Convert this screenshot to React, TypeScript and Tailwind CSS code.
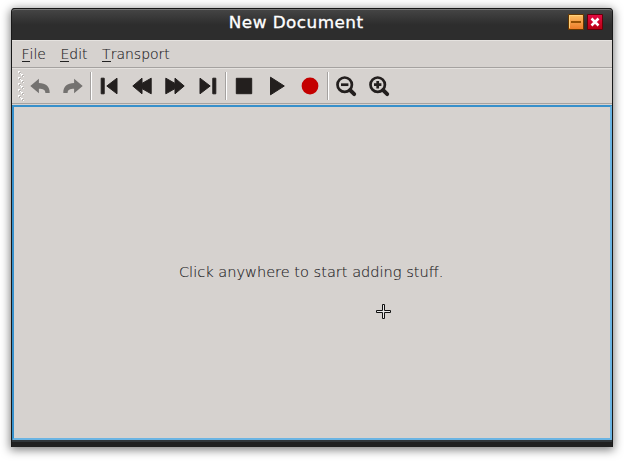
import type { ReactNode } from "react";

function Tool({ label, children }: { label: string; children: ReactNode }) {
  return (
    <button aria-label={label} className="h-[34px] w-[33px] shrink-0 text-[#231f1e]">
      <svg width="33" height="34" viewBox="0 1 33 34" fill="currentColor" stroke="currentColor" strokeWidth="1" strokeLinejoin="round">
        {children}
      </svg>
    </button>
  );
}

function Divider() {
  return <div className="mr-px h-7 w-[2px] shrink-0 border-r border-l border-r-white border-l-[#a5a2a0]" />;
}

function Grip() {
  return (
    <svg width="6" height="30" viewBox="0 0 6 30" className="ml-[6px] shrink-0" shapeRendering="crispEdges">
      {[0, 6, 12, 18, 24].map((y) => (
        <g key={y}>
          <path d={`M1 ${y + 1}h2v1h-1v1h-1z M4 ${y + 4}h2v1h-1v1h-1z`} fill="#b9b5b2" />
          <path d={`M0 ${y}h2v1h-1v1h-1z M3 ${y + 3}h2v1h-1v1h-1z M2 ${y + 2}h1v1h-1z M5 ${y + 5}h1v1h-1z`} fill="#fff" />
        </g>
      ))}
    </svg>
  );
}

function Menu({ children }: { children: string }) {
  return (
    <button className="h-[19px] whitespace-nowrap">
      <span className="inline-block h-[17px] border-b border-[#222]">{children[0]}</span>
      {children.slice(1)}
    </button>
  );
}

export default function App() {
  return (
    <div className="h-[461px] w-[624px] overflow-hidden bg-white pt-2 pl-[11px] font-['DejaVu_Sans',sans-serif] text-[#1c1b1e]">
      <div className="flex h-[439px] w-[602px] flex-col rounded-t-[4px] border-r border-l border-[#181818] bg-[#202020] shadow-[0_2px_10px_1px_rgba(0,0,0,0.5)]">
        <header className="flex h-8 shrink-0 rounded-t-[3px] border-t border-[#171717] bg-[#2e2e2e]">
          <div className="relative flex h-[31px] w-full items-start justify-center rounded-t-[3px] border-t border-[#777] bg-linear-to-b from-[#444] to-[#2d2d2d] to-50%">
            <h1 className="mt-[3px] mr-[32px] scale-x-112 text-[15px] leading-[21px] font-normal tracking-[0.42px] whitespace-nowrap text-white [-webkit-text-stroke:0.3px]">New Document</h1>
            <div className="absolute top-1 right-[9px] flex gap-[3px]">
              <button aria-label="Minimize" className="h-4 w-4">
                <svg width="16" height="16">
                  <defs><linearGradient id="min" x2="0" y2="1"><stop stopColor="#ffc267" /><stop offset="1" stopColor="#ec7927" /></linearGradient></defs>
                  <path d="M.5.5h15v15H.5z" fill="url(#min)" stroke="#653700" />
                  <path d="M1.5 14V1.5H14" fill="none" stroke="#ffd17d" />
                  <path d="M3 7h10v2H3z" fill="#955005" />
                </svg>
              </button>
              <button aria-label="Close" className="h-4 w-4">
                <svg width="16" height="16">
                  <defs><linearGradient id="close" x2="0" y2="1"><stop stopColor="#e40b45" /><stop offset="1" stopColor="#b60010" /></linearGradient></defs>
                  <path d="M.5.5h15v15H.5z" fill="url(#close)" stroke="#650009" />
                  <path d="M4.5 4.5l7 7m0-7l-7 7" fill="none" stroke="#fff" strokeWidth="2.5" />
                </svg>
              </button>
            </div>
          </div>
        </header>
        <nav className="flex h-7 shrink-0 items-start gap-[14.5px] border-t border-b border-t-[#e5e2df] border-b-[#a5a2a0] bg-[#d6d2cf] pt-1 pl-[9.5px] font-['DejaVu_Sans_Light','DejaVu_Sans',sans-serif] text-[14px] leading-[19px] font-extralight [-webkit-text-stroke:0.12px]">
          <Menu>File</Menu>
          <Menu>Edit</Menu>
          <Menu>Transport</Menu>
        </nav>
        <div className="flex h-9 shrink-0 items-center border-t border-b border-t-[#e5e2df] border-b-[#a5a2a0] bg-[#d6d2cf]">
          <Grip />
          <Tool label="Undo"><path d="M6.3 18l8.6-7.2v4.3c6.8 0 11 3.5 10.8 9.9h-4.3c0-3-2.3-4.3-6.5-4.3v4.6z" fill="#747270" stroke="none" /></Tool>
          <Tool label="Redo"><path d="M25.7 18l-8.6-7.2v4.3c-6.8 0-11 3.5-10.8 9.9h4.3c0-3 2.3-4.3 6.5-4.3v4.6z" fill="#747270" stroke="none" /></Tool>
          <Divider />
          <Tool label="Previous"><path d="M8.2 10.2h3v15.6h-3zM13.8 18L24 10.2v15.6z" /></Tool>
          <Tool label="Rewind"><path d="M6.8 18l9.2-7.8v5.2l9.2-5.2v15.6L16 20.6v5.2z" /></Tool>
          <Tool label="Fast forward"><path d="M25.2 18L16 10.2v5.2l-9.2-5.2v15.6l9.2-5.2v5.2z" /></Tool>
          <Tool label="Next"><path d="M20.8 10.2h3v15.6h-3zM18.2 18L8 10.2v15.6z" /></Tool>
          <Divider />
          <Tool label="Stop"><path d="M8.3 10.3h15.4v15.4H8.3z" /></Tool>
          <Tool label="Play"><path d="M9.5 9.2L23.3 18 9.5 26.8z" /></Tool>
          <Tool label="Record"><circle cx="16" cy="18" r="8.4" fill="#c40000" stroke="none" /></Tool>
          <Divider />
          <Tool label="Zoom out">
            <circle cx="14.7" cy="16.7" r="7.2" fill="none" strokeWidth="2.7" />
            <path d="M20 22l4.2 4.1" strokeWidth="3.9" strokeLinecap="round" />
            <path d="M11 16.7h7.4" strokeWidth="2.7" />
          </Tool>
          <Tool label="Zoom in">
            <circle cx="14.7" cy="16.7" r="7.2" fill="none" strokeWidth="2.7" />
            <path d="M20 22l4.2 4.1" strokeWidth="3.9" strokeLinecap="round" />
            <path d="M11 16.7h7.4M14.7 13v7.4" strokeWidth="2.7" />
          </Tool>
        </div>
        <div className="h-px shrink-0 bg-[#d6d2cf]" />
        <main className="relative flex h-[335px] shrink-0 items-center justify-center rounded-[1px] border-2 border-t-[#3790cb] border-r-[#6bb4e3] border-b-[#6bb4e3] border-l-[#3790cb] bg-[#d6d2cf]">
          <p className="mt-[-1px] mr-[1px] scale-x-104 font-['DejaVu_Sans_Light','DejaVu_Sans',sans-serif] text-[14px] leading-5 font-extralight whitespace-nowrap [-webkit-text-stroke:0.12px]">Click anywhere to start adding stuff.</p>
          <svg className="absolute top-[197px] left-[362px]" width="15" height="15" fill="#e8e8e8" stroke="#111" aria-hidden="true">
            <path d="M6.5.5h2v6h6v2h-6v6h-2v-6h-6v-2h6z" />
          </svg>
        </main>
        <div className="h-[2px] shrink-0 bg-[#30363a]" />
      </div>
    </div>
  );
}
